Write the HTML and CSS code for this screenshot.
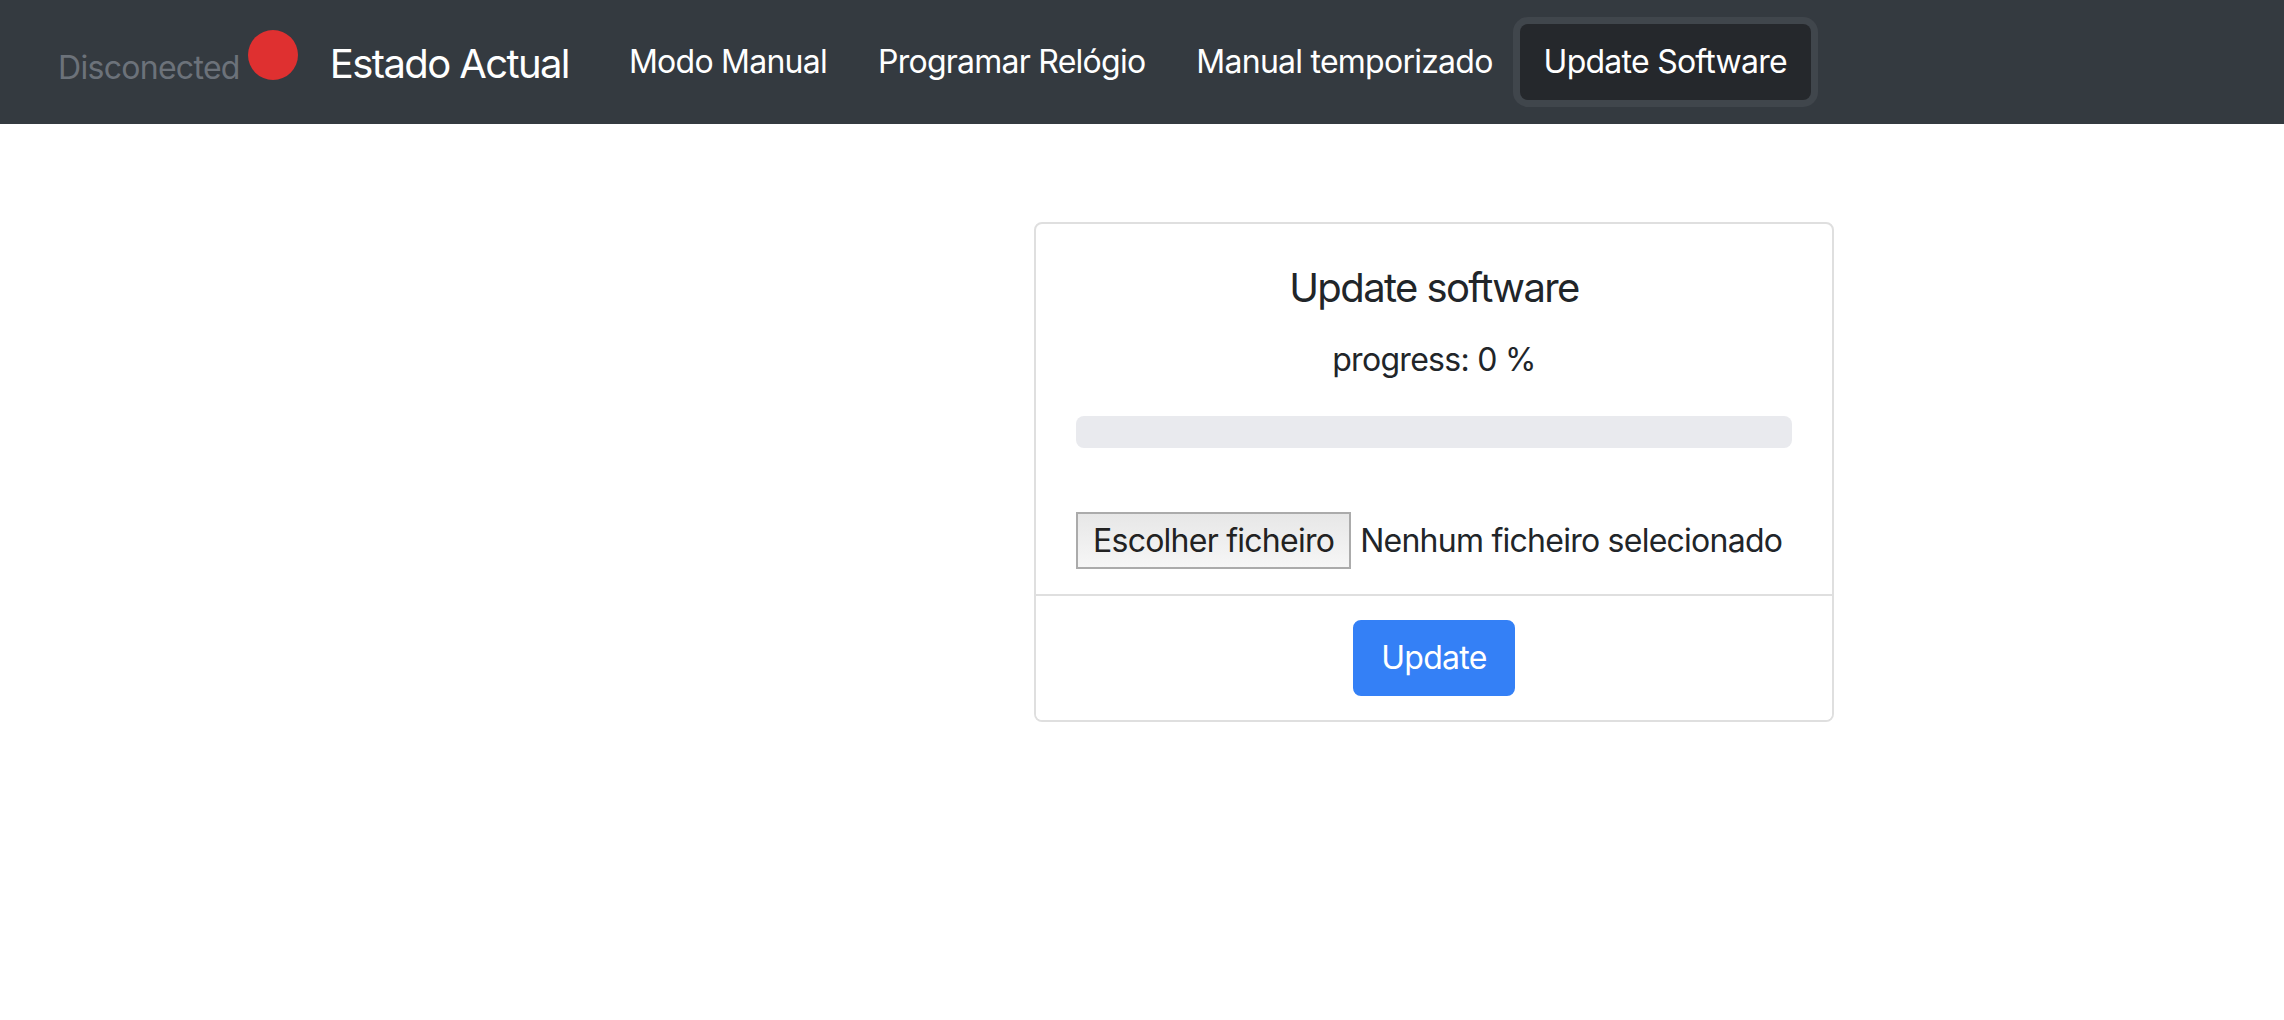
FILE: index.html
```html
<!DOCTYPE html>
<html lang="pt">
<head>
<meta charset="utf-8">
<title>Update Software</title>
<link rel="stylesheet" href="styles.css">
</head>
<body>
<nav class="navbar">
  <div class="status">
    <span class="status-text">Disconected</span>
    <span class="status-dot"></span>
  </div>
  <a class="brand" href="#">Estado Actual</a>
  <ul class="nav">
    <li><a class="nav-link" href="#">Modo Manual</a></li>
    <li><a class="nav-link" href="#">Programar Relógio</a></li>
    <li><a class="nav-link" href="#">Manual temporizado</a></li>
    <li><a class="nav-link active" href="#">Update Software</a></li>
  </ul>
</nav>
<main class="container">
  <div class="card">
    <div class="card-body">
      <h5 class="card-title">Update software</h5>
      <p class="progress-label">progress: 0 %</p>
      <div class="progress"><div class="progress-bar" style="width:0%"></div></div>
      <div class="file-input">
        <span class="file-button">Escolher ficheiro</span>
        <span class="file-name">Nenhum ficheiro selecionado</span>
      </div>
    </div>
    <div class="card-footer">
      <button class="btn-primary" type="button">Update</button>
    </div>
  </div>
</main>
</body>
</html>
```

FILE: styles.css
```css
* { box-sizing: border-box; }

html, body {
  margin: 0;
  padding: 0;
  background: #ffffff;
  font-family: Inter, "Noto Sans", "Liberation Sans", sans-serif;
  color: #212529;
  white-space: nowrap;
}

.navbar {
  display: flex;
  align-items: center;
  height: 124px;
  padding: 0 0 0 58px;
  background: #343a40;
}

.status {
  display: flex;
  align-items: flex-end;
  height: 50px;
  margin-bottom: 14px;
}

.status-text {
  font-size: 32px;
  line-height: 24px;
  letter-spacing: -0.7px;
  color: #6c727a;
}

.status-dot {
  flex-shrink: 0;
  width: 50px;
  height: 50px;
  margin-left: 8px;
  border-radius: 50%;
  background: #df3030;
}

.brand {
  margin-left: 32px;
  padding-top: 4px;
  font-size: 40px;
  line-height: 60px;
  letter-spacing: -1.6px;
  color: #ffffff;
  text-decoration: none;
}

.nav {
  display: flex;
  align-items: center;
  gap: 3px;
  margin: 0 0 0 36px;
  padding: 0;
  list-style: none;
}

.nav-link {
  display: block;
  padding: 14px 24px;
  font-size: 32px;
  line-height: 48px;
  letter-spacing: -0.75px;
  color: #ffffff;
  text-decoration: none;
  border-radius: 8px;
}

.nav-link.active {
  background: #25282c;
  box-shadow: 0 0 0 7px #40464c;
}

.container {
  width: 1920px;
  margin: 98px auto 0;
}

.card {
  width: 800px;
  margin-left: 852px;
  border: 2px solid #dfdfdf;
  border-radius: 8px;
  overflow: hidden;
}

.card-body {
  padding: 40px 40px 25px;
}

.card-title {
  margin: 0 0 24px;
  font-size: 40px;
  font-weight: 400;
  line-height: 48px;
  letter-spacing: -1.6px;
  text-align: center;
}

.progress-label {
  margin: 0 0 32px;
  font-size: 32px;
  line-height: 48px;
  letter-spacing: -0.7px;
  text-align: center;
}

.progress {
  height: 32px;
  margin-bottom: 64px;
  border-radius: 8px;
  background: #e9eaee;
  overflow: hidden;
}

.progress-bar {
  height: 100%;
  background: #3480f6;
}

.file-input {
  display: flex;
  align-items: center;
  height: 57px;
  font-size: 32px;
  letter-spacing: -0.75px;
}

.file-button {
  flex-shrink: 0;
  display: flex;
  align-items: center;
  height: 57px;
  padding: 0 15px;
  border: 2px solid #ababab;
  background: linear-gradient(#e7e7e7, #f6f6f6);
  color: #222222;
  line-height: 40px;
}

.file-name {
  flex-shrink: 0;
  margin-left: 9px;
  line-height: 40px;
  color: #212529;
}

.card-footer {
  display: flex;
  justify-content: center;
  padding: 24px 40px;
  border-top: 2px solid #dfdfdf;
  background: #ffffff;
}

.btn-primary {
  height: 76px;
  padding: 0 26px;
  border: 2px solid #3480f6;
  border-radius: 8px;
  background: #3480f6;
  color: #ffffff;
  font-family: inherit;
  font-size: 32px;
  line-height: 48px;
  letter-spacing: -0.7px;
}
```
